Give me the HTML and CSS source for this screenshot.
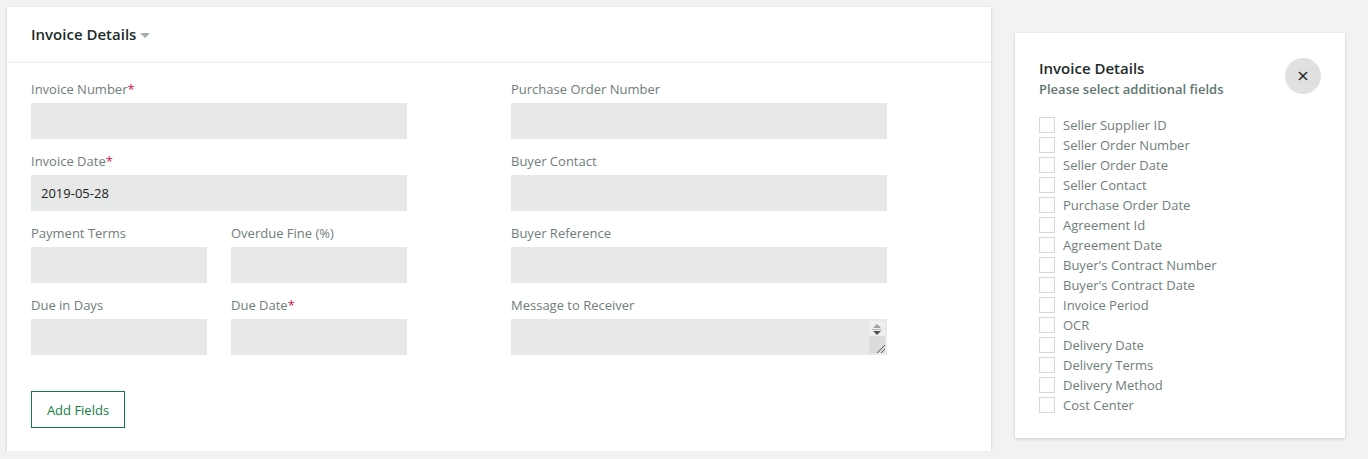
FILE: index.html
```html
<!DOCTYPE html>
<html lang="en">
<head>
<meta charset="UTF-8" />
<meta name="viewport" content="width=device-width, initial-scale=1.0" />
<title>Invoice Details</title>
<link rel="stylesheet" href="styles.css">
</head>
<body>
<div class="page">
  <!-- Main form card -->
  <div class="card">
    <div class="card-header">
      <h2 class="card-title">Invoice Details</h2>
      <span class="caret"></span>
    </div>
    <div class="card-body">
      <div class="form-grid">
        <div class="col">
          <div class="field">
            <label class="label">Invoice Number<span class="req">*</span></label>
            <input class="input" type="text" />
          </div>
          <div class="field">
            <label class="label">Invoice Date<span class="req">*</span></label>
            <input class="input" type="text" value="2019-05-28" />
          </div>
          <div class="pair">
            <div class="field">
              <label class="label">Payment Terms</label>
              <input class="input" type="text" />
            </div>
            <div class="field">
              <label class="label">Overdue Fine (%)</label>
              <input class="input" type="text" />
            </div>
          </div>
          <div class="pair">
            <div class="field">
              <label class="label">Due in Days</label>
              <input class="input" type="text" />
            </div>
            <div class="field">
              <label class="label">Due Date<span class="req">*</span></label>
              <input class="input" type="text" />
            </div>
          </div>
        </div>
        <div class="col">
          <div class="field">
            <label class="label">Purchase Order Number</label>
            <input class="input" type="text" />
          </div>
          <div class="field">
            <label class="label">Buyer Contact</label>
            <input class="input" type="text" />
          </div>
          <div class="field">
            <label class="label">Buyer Reference</label>
            <input class="input" type="text" />
          </div>
          <div class="field">
            <label class="label">Message to Receiver</label>
            <div class="textarea-wrap">
              <textarea class="input textarea"></textarea>
              <div class="scroll">
                <div class="scroll-arrows">
                  <svg width="12" height="12" viewBox="0 0 12 12">
                    <path d="M2 5 L6 1 L10 5 Z" fill="#a0a0a0" />
                    <rect x="1" y="6" width="10" height="1" fill="#b8b8b8" />
                    <path d="M2 8 L10 8 L6 12 Z" fill="#505050" />
                  </svg>
                </div>
                <div class="scroll-grip">
                  <svg width="10" height="10" viewBox="0 0 10 10">
                    <path d="M2 10 L10 2 M6 10 L10 6" stroke="#555" stroke-width="1" />
                  </svg>
                </div>
              </div>
            </div>
          </div>
        </div>
      </div>
      <button class="btn-outline">Add Fields</button>
    </div>
  </div>

  <!-- Additional fields panel -->
  <div class="panel">
    <div class="panel-head">
      <div>
        <h3 class="panel-title">Invoice Details</h3>
        <p class="panel-sub">Please select additional fields</p>
      </div>
      <button class="close">&times;</button>
    </div>
    <ul class="check-list">
      <li><span class="box"></span>Seller Supplier ID</li>
      <li><span class="box"></span>Seller Order Number</li>
      <li><span class="box"></span>Seller Order Date</li>
      <li><span class="box"></span>Seller Contact</li>
      <li><span class="box"></span>Purchase Order Date</li>
      <li><span class="box"></span>Agreement Id</li>
      <li><span class="box"></span>Agreement Date</li>
      <li><span class="box"></span>Buyer's Contract Number</li>
      <li><span class="box"></span>Buyer's Contract Date</li>
      <li><span class="box"></span>Invoice Period</li>
      <li><span class="box"></span>OCR</li>
      <li><span class="box"></span>Delivery Date</li>
      <li><span class="box"></span>Delivery Terms</li>
      <li><span class="box"></span>Delivery Method</li>
      <li><span class="box"></span>Cost Center</li>
    </ul>
  </div>
</div>
</body>
</html>
```

FILE: styles.css
```css
* {
  box-sizing: border-box;
  margin: 0;
  padding: 0;
}
body {
  background: #f1f3f2;
  font-family: 'Open Sans', sans-serif;
  font-size: 13px;
  color: #6f7e7b;
}
.page {
  display: flex;
  align-items: flex-start;
  gap: 24px;
  padding: 7px 0 0 7px;
}
.card {
  width: 984px;
  background: #fff;
  box-shadow: 0 1px 3px rgba(0,0,0,0.18);
}
.card-header {
  display: flex;
  align-items: center;
  height: 56px;
  padding: 0 24px;
  border-bottom: 2px solid #f1f3f2;
}
.card-title {
  font-size: 15px;
  font-weight: 600;
  color: #1e2b29;
}
.caret {
  width: 0;
  height: 0;
  margin: 2px 0 0 4px;
  border-left: 5px solid transparent;
  border-right: 5px solid transparent;
  border-top: 5px solid #a3adab;
}
.card-body {
  padding: 16px 24px 23px;
}
.form-grid {
  display: grid;
  grid-template-columns: 376px 376px;
  column-gap: 104px;
}
.col {
  display: flex;
  flex-direction: column;
  gap: 12px;
}
.pair {
  display: grid;
  grid-template-columns: 176px 176px;
  column-gap: 24px;
}
.field {
  display: flex;
  flex-direction: column;
}
.label {
  line-height: 20px;
  margin-bottom: 4px;
}
.req {
  color: #c8173f;
}
.input {
  height: 36px;
  width: 100%;
  border: none;
  outline: none;
  background: #e6e9e8;
  padding: 0 10px;
  font-family: inherit;
  font-size: 13px;
  color: #222;
}
.textarea-wrap {
  position: relative;
}
.textarea {
  display: block;
  resize: none;
}
.scroll {
  position: absolute;
  top: 2px;
  right: 2px;
  bottom: 2px;
  width: 16px;
  display: flex;
  flex-direction: column;
}
.scroll-arrows {
  height: 15px;
  background: #eeeeee;
  display: flex;
  justify-content: center;
  align-items: center;
}
.scroll-grip {
  flex: 1;
  background: #dcdcdc;
  display: flex;
  justify-content: flex-end;
  align-items: flex-end;
}
.btn-outline {
  margin-top: 36px;
  width: 94px;
  height: 37px;
  background: #fff;
  border: 1px solid #127c3f;
  color: #127c3f;
  font-family: inherit;
  font-size: 13px;
}
.panel {
  margin-top: 26px;
  width: 330px;
  background: #fff;
  padding: 25px 24px 23px;
  box-shadow: 0 1px 3px rgba(0,0,0,0.18);
}
.panel-head {
  display: flex;
  justify-content: space-between;
  align-items: flex-start;
}
.panel-title {
  font-size: 15px;
  font-weight: 600;
  line-height: 20px;
  color: #1e2b29;
}
.panel-sub {
  font-size: 13px;
  font-weight: 600;
  line-height: 22px;
  color: #617672;
}
.close {
  width: 36px;
  height: 36px;
  border-radius: 50%;
  border: none;
  background: #e0e0e0;
  color: #222;
  font-size: 16px;
  line-height: 36px;
  font-family: 'DejaVu Sans', sans-serif;
}
.check-list {
  list-style: none;
  margin-top: 15px;
}
.check-list li {
  display: flex;
  align-items: center;
  height: 20px;
  line-height: 20px;
}
.box {
  width: 16px;
  height: 16px;
  border: 1px solid #d3d9d7;
  margin-right: 8px;
}
```
